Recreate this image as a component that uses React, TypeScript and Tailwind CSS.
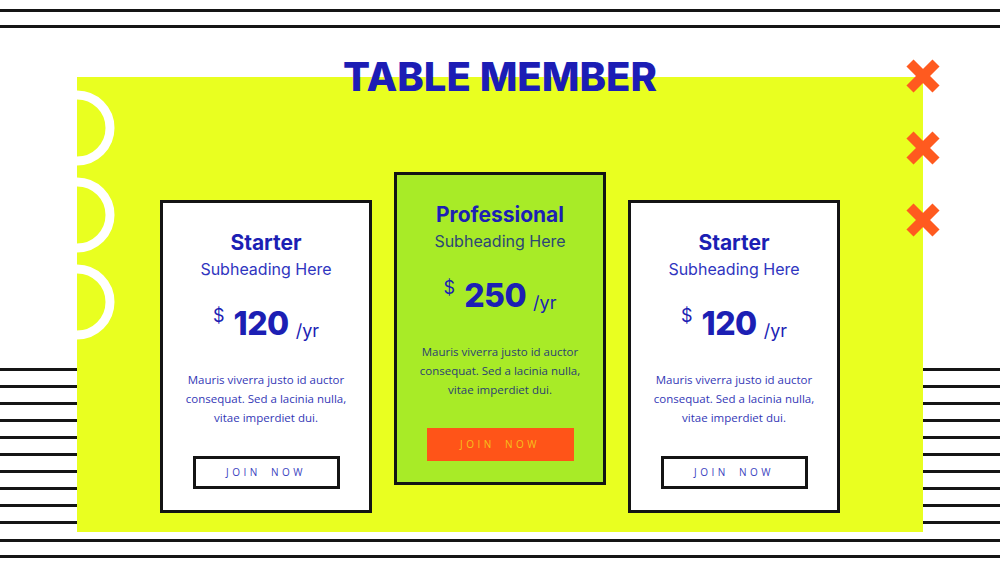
import React from "react";

const Line = () => <div className="h-[3px] w-full bg-[#151515]" />;

function SideStripes() {
  return (
    <div className="flex w-[77px] flex-col justify-end gap-[14px] pb-[8px]">
      {Array.from({ length: 10 }).map((_, i) => (
        <div key={i} className="h-[3px] w-full bg-[#151515]" />
      ))}
    </div>
  );
}

function Cross() {
  return (
    <svg width="34" height="34" viewBox="0 0 34 34">
      <line x1="4" y1="4" x2="30" y2="30" stroke="#ff5a1f" strokeWidth="10" />
      <line x1="30" y1="4" x2="4" y2="30" stroke="#ff5a1f" strokeWidth="10" />
    </svg>
  );
}

function Ring() {
  return (
    <svg width="76" height="76" viewBox="0 0 76 76">
      <circle cx="38" cy="38" r="33" fill="none" stroke="#ffffff" strokeWidth="9" />
    </svg>
  );
}

type CardProps = { title: string; price: string; featured?: boolean };

function Card({ title, price, featured }: CardProps) {
  const sub = featured ? "text-[#2c4676]" : "text-[#2f35c0]";
  const body = featured ? "text-[#2b3f72]" : "text-[#3337b6]";
  return (
    <div
      className={`flex h-[313px] w-[212px] flex-col items-center border-[3px] border-[#141414] pt-[28px] ${
        featured ? "bg-[#a8eb27]" : "mt-[28px] bg-white"
      }`}
    >
      <div className="text-[21px] font-bold leading-[24px] text-[#1c1fb4]">{title}</div>
      <div className={`mt-[4px] text-[16px] leading-[20px] ${sub}`}>Subheading Here</div>
      <div className="mt-[25px] flex h-[40px] items-start text-[#1c1fb4]">
        <span className="mt-[2px] text-[18px] leading-[20px]">$</span>
        <span className="ml-[9px] text-[32px] font-extrabold leading-[40px] tracking-[-0.5px]">{price}</span>
        <span className="ml-[7px] mt-[17px] text-[18px] leading-[20px]">/yr</span>
      </div>
      <p
        className={`mt-[26px] text-center font-['Open_Sans',sans-serif] text-[11.5px] leading-[19px] ${body}`}
      >
        Mauris viverra justo id auctor
        <br />
        consequat. Sed a lacinia nulla,
        <br />
        vitae imperdiet dui.
      </p>
      {featured ? (
        <div className="mt-[29px] flex h-[33px] w-[147px] items-center justify-center bg-[#ff5418] font-['Open_Sans',sans-serif] text-[10px] tracking-[3.5px] text-[#f6c11c] [word-spacing:4px]">
          JOIN NOW
        </div>
      ) : (
        <div className="mt-[29px] flex h-[33px] w-[147px] items-center justify-center border-[3px] border-[#141414] font-['Open_Sans',sans-serif] text-[10px] tracking-[3.5px] text-[#3a3fc0] [word-spacing:4px]">
          JOIN NOW
        </div>
      )}
    </div>
  );
}

export default function App() {
  return (
    <div className="h-[562px] w-[1000px] overflow-hidden bg-white pt-[9px] font-['Inter',sans-serif]">
      <Line />
      <div className="mt-[13px]">
        <Line />
      </div>
      <div className="mt-[49px] flex h-[455px]">
        <SideStripes />
        <div className="relative flex w-[846px] flex-col items-center bg-[#e9ff20]">
          <div className="pointer-events-none absolute left-[-38px] top-[13px] flex flex-col gap-[11px]">
            <Ring />
            <Ring />
            <Ring />
          </div>
          <div className="absolute right-[-17px] top-[-18px] flex flex-col gap-[38px]">
            <Cross />
            <Cross />
            <Cross />
          </div>
          <h1 className="relative mt-[-21px] h-[41px] text-[40px] font-extrabold leading-[41px] text-[#1c1db5]">
            TABLE MEMBER
          </h1>
          <div className="mt-[75px] flex items-start gap-[22px]">
            <Card title="Starter" price="120" />
            <Card title="Professional" price="250" featured />
            <Card title="Starter" price="120" />
          </div>
        </div>
        <SideStripes />
      </div>
      <div className="mt-[7px]">
        <Line />
      </div>
      <div className="mt-[13px]">
        <Line />
      </div>
    </div>
  );
}
